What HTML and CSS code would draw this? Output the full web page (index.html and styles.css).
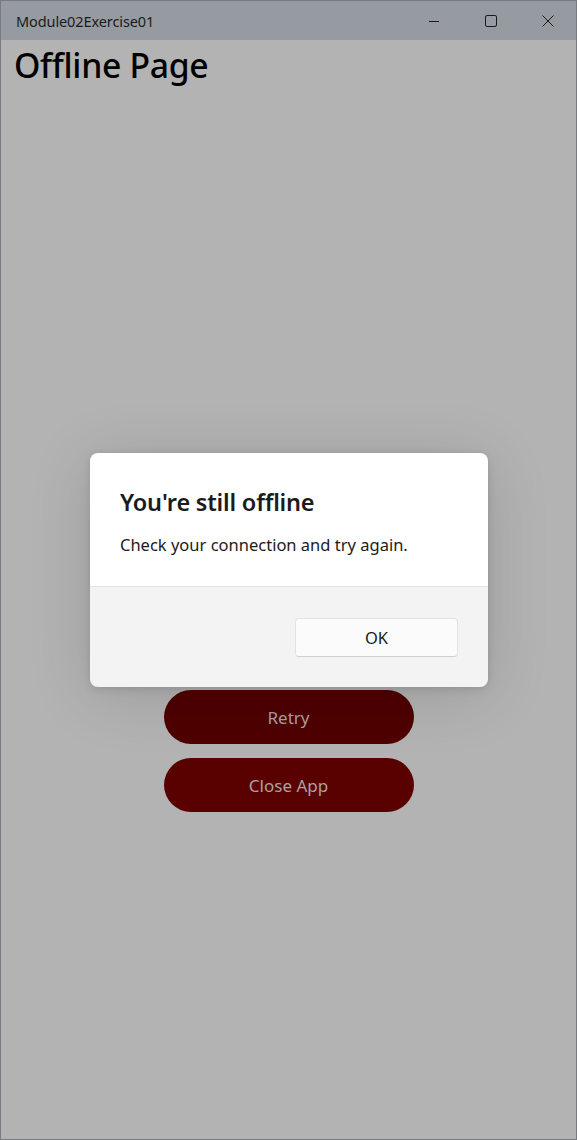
FILE: index.html
```html
<!DOCTYPE html>
<html>
<head>
<meta charset="utf-8">
<link rel="stylesheet" href="styles.css">
</head>
<body>
<div class="window">
  <div class="titlebar">
    <span class="app-title">Module02Exercise01</span>
    <div class="controls">
      <span class="ctl"><svg width="12" height="12" viewBox="0 0 12 12"><path d="M1 6.5h10" stroke="#1a1a1a" stroke-width="1"/></svg></span>
      <span class="ctl"><svg width="12" height="12" viewBox="0 0 12 12"><rect x="0.5" y="0.5" width="11" height="11" rx="1.5" fill="none" stroke="#1a1a1a" stroke-width="1"/></svg></span>
      <span class="ctl"><svg width="12" height="12" viewBox="0 0 12 12"><path d="M0.5 0.5l11 11M11.5 0.5l-11 11" stroke="#1a1a1a" stroke-width="1"/></svg></span>
    </div>
  </div>
  <div class="content">
    <h1 class="page-title">Offline Page</h1>
    <div class="actions">
      <button class="pill retry">Retry</button>
      <button class="pill close">Close App</button>
    </div>
    <div class="dialog">
      <div class="dialog-body">
        <div class="dialog-title">You're still offline</div>
        <div class="dialog-text">Check your connection and try again.</div>
      </div>
      <div class="dialog-footer">
        <button class="ok">OK</button>
      </div>
    </div>
  </div>
</div>
</body>
</html>
```
FILE: styles.css
```css
html, body {
  margin: 0;
  padding: 0;
}
body {
  width: 577px;
  height: 1140px;
  font-family: "Noto Sans", "Open Sans", sans-serif;
}
.window {
  box-sizing: border-box;
  width: 577px;
  height: 1140px;
  border: 1px solid #777a7e;
  display: flex;
  flex-direction: column;
}
.titlebar {
  height: 39px;
  background: #969aa1;
  display: flex;
  align-items: center;
  justify-content: space-between;
  flex-shrink: 0;
}
.app-title {
  margin-left: 15px;
  font-size: 14.5px;
  color: #1b1b1b;
  letter-spacing: -0.1px;
}
.controls {
  display: flex;
  height: 100%;
}
.ctl {
  width: 57px;
  display: flex;
  align-items: center;
  justify-content: center;
}
.content {
  position: relative;
  flex: 1;
  background: #b3b3b3;
  display: flex;
  flex-direction: column;
}
.page-title {
  margin: 0;
  padding: 3px 0 0 13px;
  font-size: 33.7px;
  font-weight: 500;
  line-height: 44px;
  color: #000;
  letter-spacing: -0.3px;
}
.actions {
  display: flex;
  flex-direction: column;
  align-items: center;
  gap: 14px;
  margin-top: 603px;
}
.pill {
  width: 250px;
  height: 54px;
  border: none;
  border-radius: 27px;
  font-family: "Noto Sans", "Open Sans", sans-serif;
  font-size: 17px;
  color: #a9a2a2;
  padding: 0;
}
.retry { background: #4f0000; }
.close { background: #590000; }
.dialog {
  position: absolute;
  left: 89px;
  top: 413px;
  width: 398px;
  height: 234px;
  border-radius: 8px;
  overflow: hidden;
  box-shadow: 0 8px 64px rgba(0,0,0,0.14), 0 2px 8px rgba(0,0,0,0.12);
  display: flex;
  flex-direction: column;
}
.dialog-body {
  background: #ffffff;
  height: 134px;
  padding: 33px 0 0 30px;
  box-sizing: border-box;
  border-bottom: 1px solid #e2e2e2;
}
.dialog-title {
  font-size: 23.5px;
  font-weight: 600;
  color: #1b1b1b;
  line-height: 32px;
  letter-spacing: -0.2px;
}
.dialog-text {
  margin-top: 16px;
  font-size: 16.5px;
  color: #1b1b1b;
  line-height: 22px;
}
.dialog-footer {
  flex: 1;
  background: #f3f3f3;
  display: flex;
  justify-content: flex-end;
  align-items: flex-start;
  padding: 31px 30px 0 0;
}
.ok {
  width: 163px;
  height: 39px;
  background: #fbfbfb;
  border: 1px solid #e3e3e3;
  border-bottom-color: #d0d0d0;
  border-radius: 4px;
  font-family: "Noto Sans", "Open Sans", sans-serif;
  font-size: 16.5px;
  color: #1b1b1b;
  padding: 0;
}
```
